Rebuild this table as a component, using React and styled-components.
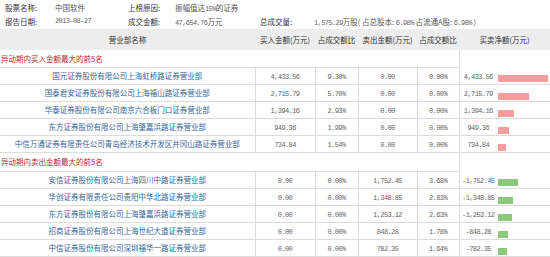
import React from 'react'
import styled, { createGlobalStyle } from 'styled-components'

const GlobalStyle = createGlobalStyle`
  body {
    margin: 0;
    background: #fff;
    font-family: "Noto Sans CJK SC", "Noto Sans", sans-serif;
  }
`

const Page = styled.div`
  width: 550px;
  height: 257px;
  overflow: hidden;
  font-size: 7.5px;
  color: #444;
`

const Info = styled.div`
  display: grid;
  grid-template-columns: 50px 73px 47px 85px 54px 1fr;
  grid-auto-rows: 14px;
  align-items: center;
  padding-left: 5px;
  margin-bottom: 1px;
  white-space: nowrap;
`

const Label = styled.span`
  color: #333;
`

const Value = styled.span`
  color: #555;
`

const Num = styled.span`
  font-family: "Liberation Mono", monospace;
  font-size: 7px;
  letter-spacing: -0.6px;
  color: #666;
`

const Table = styled.table`
  width: 550px;
  border-collapse: collapse;
  table-layout: fixed;
`

const HeadRow = styled.tr`
  height: 21px;
  background: #ededed;
`

const HeadCell = styled.th`
  font-weight: normal;
  color: #333;
  padding: 0;
  text-align: center;
  white-space: nowrap;
`

const SectionRow = styled.tr`
  height: ${p => p.$h}px;
`

const SectionCell = styled.td`
  color: #b52a2a;
  padding: 0 0 0 1px;
  border-bottom: 1px solid #dcdcdc;
`

const Row = styled.tr`
  height: 17px;
  border-bottom: 1px solid #dcdcdc;
`

const Cell = styled.td`
  padding: 0;
  text-align: center;
  white-space: nowrap;
  border-left: ${p => (p.$first ? 'none' : '1px solid #dcdcdc')};
`

const NameCell = styled(Cell)`
  color: #336699;
`

const BarCell = styled.td`
  padding: 8px 0 0 1px;
  vertical-align: top;
`

const Bar = styled.div`
  height: 7px;
  background: ${p => (p.$sell ? '#8cc97d' : '#f59c9e')};
`

const buys = [
  ['国元证券股份有限公司上海虹桥路证券营业部', '4,433.56', '9.30%', '0.00', '0.00%', '4,433.56', 4433.56],
  ['国泰君安证券股份有限公司上海福山路证券营业部', '2,715.79', '5.70%', '0.00', '0.00%', '2,715.79', 2715.79],
  ['华泰证券股份有限公司南京六合板门口证券营业部', '1,394.16', '2.93%', '0.00', '0.00%', '1,394.16', 1394.16],
  ['东方证券股份有限公司上海肇嘉浜路证券营业部', '949.36', '1.99%', '0.00', '0.00%', '949.36', 949.36],
  ['中信万通证券有限责任公司青岛经济技术开发区井冈山路证券营业部', '734.84', '1.54%', '0.00', '0.00%', '734.84', 734.84],
]

const sells = [
  ['安信证券股份有限公司上海四川中路证券营业部', '0.00', '0.00%', '1,752.45', '3.68%', '-1,752.45', 1752.45],
  ['华创证券有限责任公司贵阳中华北路证券营业部', '0.00', '0.00%', '1,348.85', '2.83%', '-1,348.85', 1348.85],
  ['东方证券股份有限公司上海肇嘉浜路证券营业部', '0.00', '0.00%', '1,253.12', '2.63%', '-1,253.12', 1253.12],
  ['招商证券股份有限公司上海世纪大道证券营业部', '0.00', '0.00%', '848.28', '1.78%', '-848.28', 848.28],
  ['中信证券股份有限公司深圳福华一路证券营业部', '0.00', '0.00%', '782.35', '1.64%', '-782.35', 782.35],
]

const MAX = 4433.56

const DataRow = ({ row, sell }) => (
  <Row>
    <NameCell $first>{row[0]}</NameCell>
    {row.slice(1, 6).map((v, i) => (
      <Cell key={i}>
        <Num>{v}</Num>
      </Cell>
    ))}
    <BarCell>
      <Bar $sell={sell} style={{ width: (row[6] / MAX) * 50 }} />
    </BarCell>
  </Row>
)

const Section = ({ title, h }) => (
  <SectionRow $h={h}>
    <SectionCell colSpan={5}>{title}</SectionCell>
    <Cell colSpan={2} />
  </SectionRow>
)

export default function App() {
  return (
    <Page>
      <GlobalStyle />
      <Info>
        <Label>股票名称:</Label>
        <Value>中国软件</Value>
        <Label>上榜原因:</Label>
        <Value>
          振幅值达<Num>15%</Num>的证券
        </Value>
        <span />
        <span />
        <Label>报告日期:</Label>
        <Num>2013-08-27</Num>
        <Label>成交金额:</Label>
        <Value>
          <Num>47,654.76</Num>万元
        </Value>
        <Label>总成交量:</Label>
        <Value>
          <Num>1,575.29</Num>万股( 占总股本: <Num>6.98%</Num> 占流通A股: <Num>6.98%</Num> )
        </Value>
      </Info>
      <Table>
        <colgroup>
          <col style={{ width: 255 }} />
          <col style={{ width: 60 }} />
          <col style={{ width: 43 }} />
          <col style={{ width: 59 }} />
          <col style={{ width: 42 }} />
          <col style={{ width: 38 }} />
          <col style={{ width: 53 }} />
        </colgroup>
        <thead>
          <HeadRow>
            <HeadCell>营业部名称</HeadCell>
            <HeadCell>买入金额(万元)</HeadCell>
            <HeadCell>占成交额比</HeadCell>
            <HeadCell>卖出金额(万元)</HeadCell>
            <HeadCell>占成交额比</HeadCell>
            <HeadCell colSpan={2}>买卖净额(万元)</HeadCell>
          </HeadRow>
        </thead>
        <tbody>
          <Section title="异动期内买入金额最大的前5名" h={17} />
          {buys.map(r => (
            <DataRow key={r[0]} row={r} />
          ))}
          <Section title="异动期内卖出金额最大的前5名" h={19} />
          {sells.map((r, i) => (
            <DataRow key={i} row={r} sell />
          ))}
        </tbody>
      </Table>
    </Page>
  )
}
